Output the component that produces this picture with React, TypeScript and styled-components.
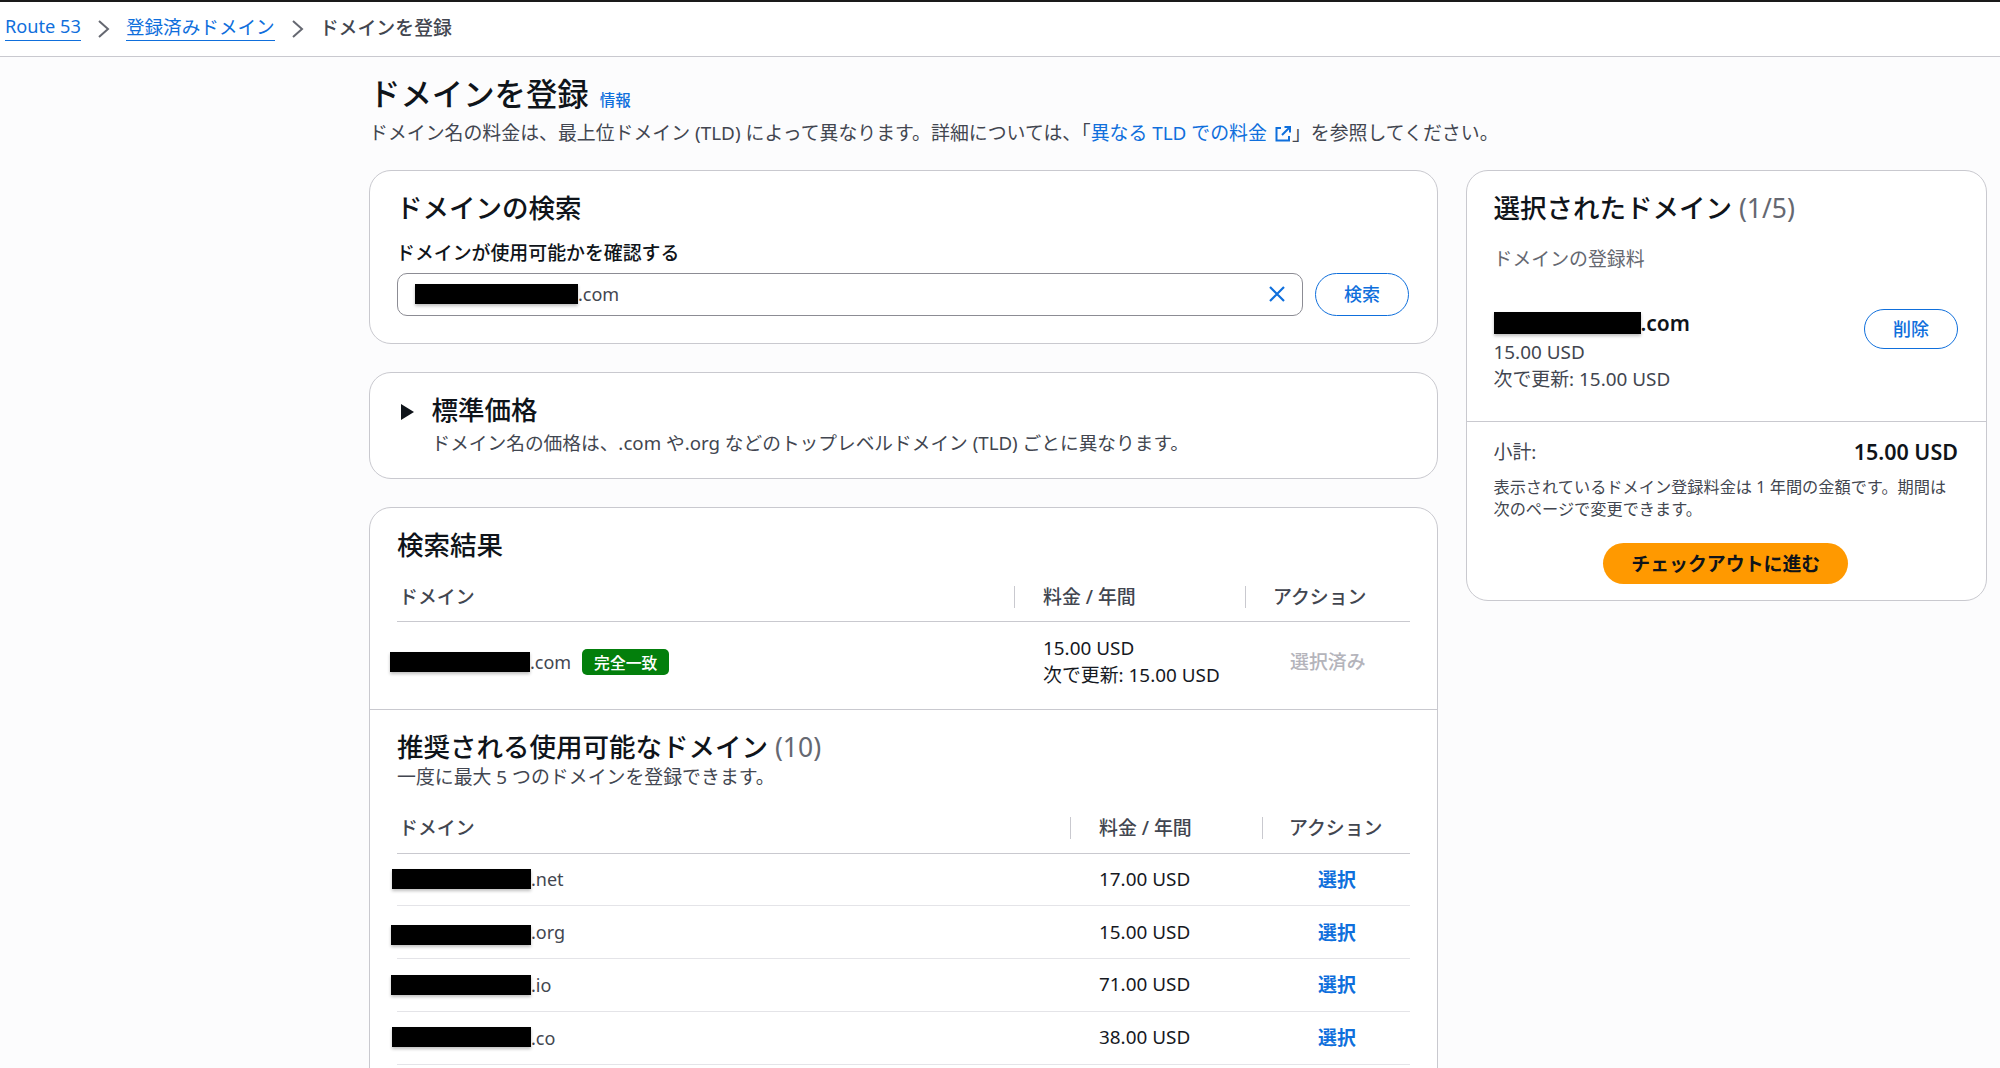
import React from "react";
import styled, { createGlobalStyle } from "styled-components";

const Global = createGlobalStyle`
  html, body { margin: 0; padding: 0; height: 1068px; overflow: hidden; background: #fcfcfd; }
  body {
    font-family: "Noto Sans", "Noto Sans CJK JP", sans-serif;
    font-size: 18.9px;
    color: #0f141a;
  }
  * { box-sizing: border-box; }
`;

const Page = styled.div`
  height: 1068px;
  overflow: hidden;
  border-top: 2px solid #1a1a1a;
`;
const Breadcrumbs = styled.nav`
  height: 55px;
  padding: 0 0 1px 5px;
  display: flex;
  align-items: center;
  gap: 16px;
  background: #fff;
  border-bottom: 1.5px solid #c9c9cf;
`;
const Crumb = styled.a<{ $latin?: boolean }>`
  color: #0f6fdc;
  font-size: ${(p) => (p.$latin ? "18.2px" : "18.6px")};
  line-height: 21px;
  padding-bottom: 3px;
  border-bottom: 1.5px solid #0f6fdc;
`;
const CrumbCurrent = styled.span`
  color: #424650;
  font-weight: 500;
  margin-top: -3px;
`;
const Main = styled.main`
  padding: 0 14px 0 369px;
`;
const Header = styled.header`
  padding-top: 15px;
  height: 113px;
`;
const TitleRow = styled.div`
  display: flex;
  align-items: baseline;
  gap: 11px;
  line-height: 44px;
`;
const H1 = styled.h1`
  margin: 0;
  font-size: 31.4px;
  font-weight: 500;
  color: #0f141a;
`;
const Info = styled.a`
  color: #0f6fdc;
  font-size: 15.5px;
  font-weight: 500;
`;
const Lead = styled.p`
  margin: -1px 0 0;
  color: #424650;
  line-height: 25px;
`;
const TextLink = styled.a`
  color: #0f6fdc;
  display: inline-flex;
  align-items: center;
  gap: 7px;
`;
const Columns = styled.div`
  display: grid;
  grid-template-columns: 1069px 521px;
  gap: 28px;
  align-items: start;
  margin-right: -1px;
`;
const Stack = styled.div`
  display: flex;
  flex-direction: column;
  gap: 28px;
`;
const Card = styled.section`
  background: #fff;
  border: 1.5px solid #c9c9cf;
  border-radius: 22px;
`;
const SearchCard = styled(Card)`
  height: 174px;
  padding: 19px 27px 0;
`;
const H2 = styled.h2`
  margin: 0;
  font-size: 26.5px;
  font-weight: 500;
  line-height: 36px;
  color: #0f141a;
`;
const SearchTitle = styled(H2)`
  margin-left: -1px;
`;
const Count = styled.span`
  color: #656871;
  font-weight: 400;
`;
const FieldLabel = styled.label`
  display: block;
  margin: 13.5px 0 0 -1px;
  font-weight: 500;
  line-height: 26px;
  color: #0f141a;
`;
const SearchRow = styled.div`
  display: flex;
  gap: 12px;
  margin-top: 7px;
`;
const Input = styled.div`
  width: 906px;
  height: 43px;
  border: 1.5px solid #8c8c94;
  border-radius: 10px;
  padding: 0 16px 0 17px;
  display: flex;
  align-items: center;
  color: #424650;
  font-size: 18px;
`;
const Redact = styled.span<{ $w: number; $h?: number; $ml?: number; $mt?: number }>`
  display: inline-block;
  flex: none;
  width: ${(p) => p.$w}px;
  height: ${(p) => p.$h ?? 20}px;
  margin-left: ${(p) => p.$ml ?? 0}px;
  margin-top: ${(p) => p.$mt ?? 0}px;
  background: #000;
  box-shadow: 0 2px 3px rgba(0, 0, 0, 0.25);
`;
const ClearIcon = styled.svg`
  margin-left: auto;
  flex: none;
`;
const PillButton = styled.button<{ $w: number; $h: number }>`
  width: ${(p) => p.$w}px;
  height: ${(p) => p.$h}px;
  flex: none;
  background: #fff;
  border: 1.5px solid #0f6fdc;
  border-radius: 22px;
  color: #0f6fdc;
  font: inherit;
  font-size: 18px;
  font-weight: 500;
  padding: 0 0 2px;
`;
const PricingCard = styled(Card)`
  height: 107px;
  padding: 19px 28px 0 31px;
  display: flex;
  gap: 17.5px;
`;
const Caret = styled.svg`
  margin-top: 12px;
  flex: none;
`;
const PricingText = styled.p`
  margin: 2px 0 0;
  color: #424650;
  font-size: 18.7px;
  line-height: 25px;
`;
const ResultsCard = styled(Card)`
  height: 620px;
`;
const ResultsTop = styled.div`
  padding: 19px 27px 0;
  height: 202px;
  border-bottom: 1.5px solid #c9c9cf;
`;
const ResultsBottom = styled.div`
  padding: 19px 27px 0;
`;
const TableHead = styled.div<{ $cols: string; $mt: number }>`
  display: grid;
  grid-template-columns: ${(p) => p.$cols};
  margin-top: ${(p) => p.$mt}px;
  height: 41px;
  padding-bottom: 9px;
  align-items: center;
  border-bottom: 1.5px solid #c9c9cf;
`;
const HeadCell = styled.div<{ $pad?: number }>`
  height: 22px;
  line-height: 22px;
  padding-left: ${(p) => p.$pad ?? 2}px;
  border-left: ${(p) => (p.$pad ? "1.5px solid #c9c9cf" : "none")};
  color: #424650;
  font-weight: 500;
  white-space: nowrap;
`;
const Row = styled.div<{ $cols: string; $h: number; $line?: boolean }>`
  display: grid;
  grid-template-columns: ${(p) => p.$cols};
  height: ${(p) => p.$h}px;
  align-items: center;
  border-bottom: ${(p) => (p.$line ? "1px solid #e4e4e8" : "none")};
`;
const DomainCell = styled.div`
  display: flex;
  align-items: center;
  color: #424650;
  font-size: 18px;
  white-space: nowrap;
`;
const MatchBadge = styled.span`
  margin-left: 11px;
  width: 87px;
  height: 26px;
  background: #037f0c;
  border-radius: 5px;
  color: #fff;
  font-size: 15.8px;
  font-weight: 500;
  display: flex;
  align-items: center;
  justify-content: center;
`;
const PriceCell = styled.div<{ $pl: number }>`
  padding-left: ${(p) => p.$pl}px;
  line-height: 27px;
  color: #16191f;
  white-space: nowrap;
`;
const Muted = styled.div`
  padding-left: 45px;
  margin-top: -2px;
  color: #b4b4bb;
  white-space: nowrap;
  font-weight: 500;
`;
const SelectLink = styled.a`
  display: block;
  padding-left: 56px;
  margin-top: -1px;
  color: #0f6fdc;
  font-weight: 600;
`;
const SecondaryNote = styled.div`
  color: #424650;
  line-height: 22px;
  margin-top: 0.5px;
`;
const SummaryCard = styled(Card)`
  height: 431px;
`;
const SummaryTop = styled.div`
  height: 251px;
  padding: 19px 28px 0 26.5px;
  border-bottom: 1.5px solid #c9c9cf;
`;
const SummarySub = styled.div`
  margin-top: 19.5px;
  color: #656871;
  line-height: 26px;
`;
const SummaryItem = styled.div`
  display: flex;
  justify-content: space-between;
  margin-top: 39px;
`;
const ItemName = styled.div`
  display: flex;
  align-items: center;
  font-weight: 600;
  font-size: 21px;
  height: 24px;
`;
const ItemText = styled.div`
  color: #424650;
  line-height: 27px;
  margin-top: 4.5px;
`;
const DeleteWrap = styled.div`
  margin-top: -2px;
`;
const SummaryBottom = styled.div`
  padding: 16px 28px 0 26.5px;
`;
const TotalRow = styled.div`
  display: flex;
  justify-content: space-between;
  align-items: center;
  color: #424650;
  line-height: 28px;
`;
const TotalValue = styled.strong`
  font-size: 21.5px;
  font-weight: 600;
  color: #0f141a;
`;
const Note = styled.p`
  margin: 10px 0 0;
  font-size: 16.2px;
  line-height: 22px;
  color: #424650;
`;
const Checkout = styled.button`
  display: block;
  margin: 23px auto 0;
  width: 245px;
  height: 41px;
  background: #ff9900;
  border: none;
  border-radius: 20.5px;
  color: #0f141a;
  font: inherit;
  font-weight: 600;
  padding: 0 0 2px;
`;

const Chevron = () => (
  <svg width="13" height="20" viewBox="0 0 13 20" fill="none" stroke="#656871" strokeWidth="2">
    <path d="M2 2l9 8-9 8" />
  </svg>
);
const External = () => (
  <svg width="18" height="18" viewBox="0 0 18 18" fill="none" stroke="#0f6fdc" strokeWidth="2">
    <path d="M7 3H2.5v12.5H15V11" />
    <path d="M10.5 2H16v5.5M16 2L8 10" />
  </svg>
);

const COLS1 = "617px 231px 164px";
const COLS2 = "673px 192px 147px";
const suggestions = [
  { w: 139, ml: -5, mt: 0, tld: ".net", price: "17.00 USD" },
  { w: 140, ml: -6, mt: 6, tld: ".org", price: "15.00 USD" },
  { w: 140, ml: -6, mt: 0, tld: ".io", price: "71.00 USD" },
  { w: 139, ml: -5, mt: -2, tld: ".co", price: "38.00 USD" },
];

export default function App() {
  return (
    <Page>
      <Global />
      <Breadcrumbs>
        <Crumb $latin>Route 53</Crumb>
        <Chevron />
        <Crumb>登録済みドメイン</Crumb>
        <Chevron />
        <CrumbCurrent>ドメインを登録</CrumbCurrent>
      </Breadcrumbs>
      <Main>
        <Header>
          <TitleRow>
            <H1>ドメインを登録</H1>
            <Info>情報</Info>
          </TitleRow>
          <Lead>
            ドメイン名の料金は、最上位ドメイン (TLD) によって異なります。詳細については、「
            <TextLink>
              異なる TLD での料金 <External />
            </TextLink>
            」を参照してください。
          </Lead>
        </Header>
        <Columns>
          <Stack>
            <SearchCard>
              <SearchTitle>ドメインの検索</SearchTitle>
              <FieldLabel>ドメインが使用可能かを確認する</FieldLabel>
              <SearchRow>
                <Input>
                  <Redact $w={163} />
                  .com
                  <ClearIcon width="18" height="18" viewBox="0 0 18 18" fill="none" stroke="#0f6fdc" strokeWidth="2.2">
                    <path d="M2 2l14 14M16 2L2 16" />
                  </ClearIcon>
                </Input>
                <PillButton $w={94} $h={43}>検索</PillButton>
              </SearchRow>
            </SearchCard>
            <PricingCard>
              <Caret width="13" height="16" viewBox="0 0 13 16">
                <path d="M0 0l13 8-13 8z" fill="#0f141a" />
              </Caret>
              <div>
                <H2>標準価格</H2>
                <PricingText>ドメイン名の価格は、.com や.org などのトップレベルドメイン (TLD) ごとに異なります。</PricingText>
              </div>
            </PricingCard>
            <ResultsCard>
              <ResultsTop>
                <H2>検索結果</H2>
                <TableHead $cols={COLS1} $mt={18}>
                  <HeadCell>ドメイン</HeadCell>
                  <HeadCell $pad={28}>料金 / 年間</HeadCell>
                  <HeadCell $pad={27}>アクション</HeadCell>
                </TableHead>
                <Row $cols={COLS1} $h={80}>
                  <DomainCell>
                    <Redact $w={140} $ml={-7} />
                    .com
                    <MatchBadge>完全一致</MatchBadge>
                  </DomainCell>
                  <PriceCell $pl={29}>
                    15.00 USD
                    <br />
                    次で更新: 15.00 USD
                  </PriceCell>
                  <Muted>選択済み</Muted>
                </Row>
              </ResultsTop>
              <ResultsBottom>
                <H2>
                  推奨される使用可能なドメイン <Count>(10)</Count>
                </H2>
                <SecondaryNote>一度に最大 5 つのドメインを登録できます。</SecondaryNote>
                <TableHead $cols={COLS2} $mt={25}>
                  <HeadCell>ドメイン</HeadCell>
                  <HeadCell $pad={28}>料金 / 年間</HeadCell>
                  <HeadCell $pad={26}>アクション</HeadCell>
                </TableHead>
                {suggestions.map((s) => (
                  <Row key={s.tld} $cols={COLS2} $h={52.75} $line>
                    <DomainCell>
                      <Redact $w={s.w} $ml={s.ml} $mt={s.mt} />
                      {s.tld}
                    </DomainCell>
                    <PriceCell $pl={29}>{s.price}</PriceCell>
                    <SelectLink>選択</SelectLink>
                  </Row>
                ))}
              </ResultsBottom>
            </ResultsCard>
          </Stack>
          <SummaryCard>
            <SummaryTop>
              <H2>
                選択されたドメイン <Count>(1/5)</Count>
              </H2>
              <SummarySub>ドメインの登録料</SummarySub>
              <SummaryItem>
                <div>
                  <ItemName>
                    <Redact $w={147} $h={22} />
                    .com
                  </ItemName>
                  <ItemText>
                    15.00 USD
                    <br />
                    次で更新: 15.00 USD
                  </ItemText>
                </div>
                <DeleteWrap>
                  <PillButton $w={94} $h={40}>削除</PillButton>
                </DeleteWrap>
              </SummaryItem>
            </SummaryTop>
            <SummaryBottom>
              <TotalRow>
                小計:
                <TotalValue>15.00 USD</TotalValue>
              </TotalRow>
              <Note>表示されているドメイン登録料金は 1 年間の金額です。期間は次のページで変更できます。</Note>
              <Checkout>チェックアウトに進む</Checkout>
            </SummaryBottom>
          </SummaryCard>
        </Columns>
      </Main>
    </Page>
  );
}
